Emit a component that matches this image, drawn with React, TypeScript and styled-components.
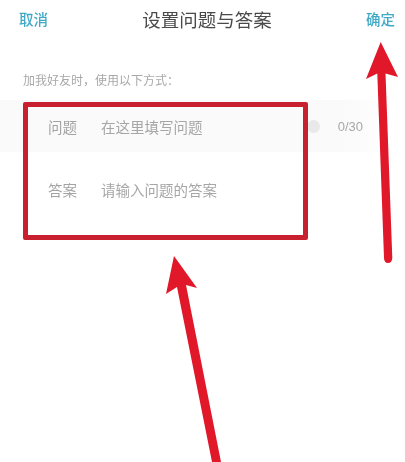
import React from 'react'
import styled, { createGlobalStyle } from 'styled-components'

const GlobalStyle = createGlobalStyle`
  html, body {
    margin: 0;
    padding: 0;
    background: #fff;
  }
  * {
    box-sizing: border-box;
  }
`

const App = () => {
  return (
    <Page>
      <GlobalStyle />
      <Header>
        <HeaderAction>取消</HeaderAction>
        <Title>设置问题与答案</Title>
        <HeaderAction>确定</HeaderAction>
      </Header>
      <Hint>加我好友时，使用以下方式：</Hint>
      <Form>
        <Row $filled>
          <Label>问题</Label>
          <Placeholder>在这里填写问题</Placeholder>
          <ClearDot />
          <Counter>0/30</Counter>
        </Row>
        <Row>
          <Label>答案</Label>
          <Placeholder>请输入问题的答案</Placeholder>
        </Row>
      </Form>
      <Highlight />
      <Arrows viewBox="0 0 405 462">
        <path d="M380.7 42 L398 77 L385.5 73.5 L392.3 258 Q392 263 388 263 Q384.2 263 384 258 L377.3 73.5 L366 79 Z" />
        <path d="M174 256 L197 288 L186 285 L221 462 L212 462 L177 287 L166 294 Z" />
      </Arrows>
    </Page>
  )
}

const Page = styled.div`
  position: relative;
  width: 405px;
  height: 462px;
  overflow: hidden;
  background: #fff;
  font-family: 'Noto Sans CJK SC', 'Liberation Sans', sans-serif;
  filter: blur(0.45px);
`
const Header = styled.header`
  display: flex;
  align-items: center;
  justify-content: space-between;
  height: 37px;
  padding: 0 10px 0 19px;
`
const HeaderAction = styled.span`
  font-size: 14.5px;
  font-weight: 500;
  color: #3fa9c6;
`
const Title = styled.h1`
  margin: 0;
  font-size: 18.5px;
  font-weight: 400;
  color: #4a4a4a;
`
const Hint = styled.p`
  margin: 35px 0 0 23px;
  font-size: 12px;
  line-height: 16px;
  color: #a8a8a8;
`
const Form = styled.div`
  display: flex;
  flex-direction: column;
  margin-top: 12px;
`
const Row = styled.div<{ $filled?: boolean }>`
  display: flex;
  align-items: center;
  width: 405px;
  height: 52px;
  padding: 0 42px 0 48px;
  background: ${(props) => (props.$filled ? 'linear-gradient(90deg, #fafafa 0, #fafafa 345px, #fff 395px)' : '#fff')};
  & + & {
    margin-top: 11px;
  }
`
const Label = styled.span`
  width: 53px;
  font-size: 14.5px;
  color: #a3a3a3;
`
const Placeholder = styled.span`
  flex: 1;
  font-size: 14.5px;
  color: #a6a6a6;
`
const ClearDot = styled.i`
  width: 13px;
  height: 13px;
  margin-right: 18px;
  border-radius: 50%;
  background: #e9e9e9;
`
const Counter = styled.span`
  font-family: 'Liberation Sans', sans-serif;
  font-size: 13px;
  color: #a8a8a8;
`
const Highlight = styled.div`
  position: absolute;
  left: 23px;
  top: 102px;
  width: 285px;
  height: 138px;
  border: 5px solid #c9202f;
  border-radius: 2px;
`
const Arrows = styled.svg`
  position: absolute;
  left: 0;
  top: 0;
  width: 405px;
  height: 462px;
  fill: #e0182a;
`

export default App
